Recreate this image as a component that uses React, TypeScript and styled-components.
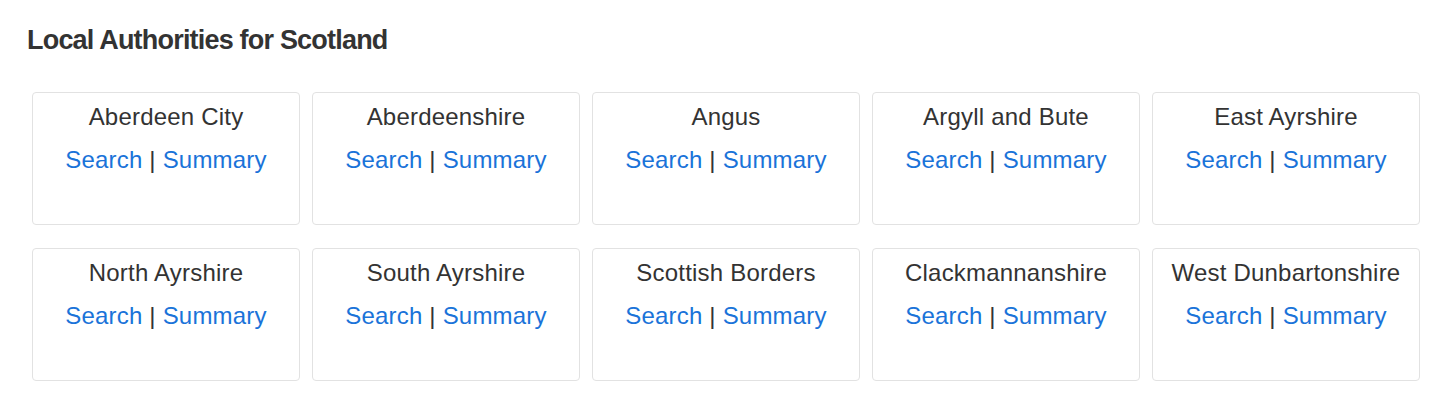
import React from "react";
import styled, { createGlobalStyle } from "styled-components";

const GlobalStyle = createGlobalStyle`
  html, body {
    margin: 0;
    padding: 0;
    background: #ffffff;
  }
  body {
    font-family: "Liberation Sans", Arial, Helvetica, sans-serif;
    color: #333333;
  }
`;

const Page = styled.div`
  padding: 27px 32px 0 27px;
`;

const Title = styled.h3`
  margin: 0 0 38px 0;
  font-size: 27px;
  line-height: 27px;
  font-weight: 700;
  letter-spacing: -0.8px;
  color: #333333;
`;

const Grid = styled.div`
  margin-left: 5px;
  display: grid;
  grid-template-columns: repeat(5, 268px);
  column-gap: 12px;
  row-gap: 23px;
`;

const Card = styled.div`
  box-sizing: border-box;
  height: 133px;
  border: 1px solid #e2e2e2;
  border-radius: 4px;
  padding-top: 7px;
  text-align: center;
  font-size: 24px;
  letter-spacing: 0.2px;
`;

const Name = styled.div`
  line-height: 34px;
  margin-bottom: 9px;
  color: #333333;
`;

const Links = styled.div`
  line-height: 34px;
  color: #333333;
`;

const Link = styled.a`
  color: #1a73d9;
  text-decoration: none;
`;

const authorities = [
  "Aberdeen City",
  "Aberdeenshire",
  "Angus",
  "Argyll and Bute",
  "East Ayrshire",
  "North Ayrshire",
  "South Ayrshire",
  "Scottish Borders",
  "Clackmannanshire",
  "West Dunbartonshire",
];

export default function App() {
  return (
    <>
      <GlobalStyle />
      <Page>
        <Title>Local Authorities for Scotland</Title>
        <Grid>
          {authorities.map((name) => (
            <Card key={name}>
              <Name>{name}</Name>
              <Links>
                <Link href="#">Search</Link> | <Link href="#">Summary</Link>
              </Links>
            </Card>
          ))}
        </Grid>
      </Page>
    </>
  );
}
